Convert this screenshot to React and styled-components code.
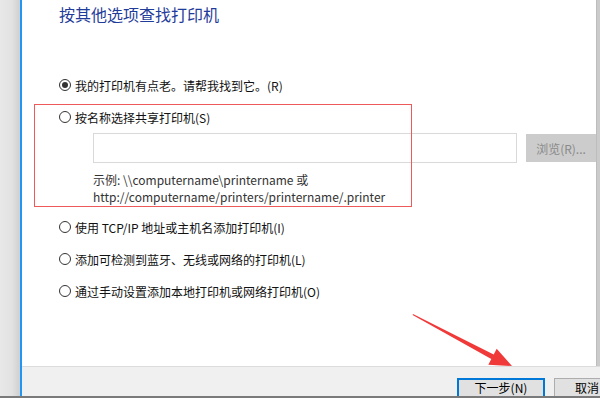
import React from "react";
import styled, { createGlobalStyle } from "styled-components";

const Global = createGlobalStyle`
  html, body { margin: 0; padding: 0; background: #fff; }
  body { font-family: "Noto Sans CJK SC", "Noto Sans", sans-serif; }
  * { box-sizing: border-box; }
`;

const Window = styled.div`
  position: relative;
  width: 600px;
  height: 398px;
  overflow: hidden;
  display: flex;
  flex-direction: column;
  background: #fff;
`;

const Body = styled.div`
  flex: 1;
  display: flex;
  min-height: 0;
`;

const SideStrip = styled.div`
  width: 20px;
  background: linear-gradient(to right, #e8e8e8 0%, #e2e2e2 60%, #cfcfcf 100%);
`;

const BlueLine = styled.div`
  width: 2px;
  background: #2196f3;
`;

const Main = styled.div`
  flex: 1;
  display: flex;
  flex-direction: column;
  min-width: 0;
`;

const ContentRow = styled.div`
  flex: 1;
  display: flex;
  min-height: 0;
`;

const Content = styled.div`
  flex: 1;
  padding: 4px 0 0 37px;
  display: flex;
  flex-direction: column;
`;

const RightEdge = styled.div`
  width: 4px;
  background: #cbcbcb;
  border-left: 1px solid #bdbdbd;
`;

const Title = styled.div`
  font-size: 16px;
  line-height: 20px;
  color: #1f3c9a;
`;

const Options = styled.div`
  margin-top: 51px;
  display: flex;
  flex-direction: column;
`;

const Option = styled.label`
  display: flex;
  align-items: center;
  height: 20px;
  margin-top: ${(p) => p.$gap || 0}px;
  font-size: 12px;
  color: #111;
  white-space: nowrap;
`;

const Radio = styled.span`
  width: 12px;
  height: 12px;
  border-radius: 50%;
  border: 1px solid #333;
  margin-right: 4px;
  display: flex;
  align-items: center;
  justify-content: center;
  background: #fff;
  &::after {
    content: "";
    width: 6px;
    height: 6px;
    border-radius: 50%;
    background: ${(p) => (p.$checked ? "#333" : "transparent")};
  }
`;

const SubBlock = styled.div`
  margin-left: 34px;
  display: flex;
  flex-direction: column;
`;

const InputRow = styled.div`
  display: flex;
  align-items: center;
  gap: 9px;
  margin-top: 6px;
`;

const TextBox = styled.div`
  flex: 1;
  height: 30px;
  border: 1px solid #d9d9d9;
  background: #fff;
`;

const BrowseButton = styled.div`
  width: 70px;
  height: 28px;
  background: #cccccc;
  color: #8a8a8a;
  font-size: 12px;
  display: flex;
  align-items: center;
  justify-content: center;
`;

const Example = styled.div`
  margin-top: 8px;
  font-size: 12px;
  line-height: 17px;
  color: #333;
  white-space: nowrap;
`;

const Footer = styled.div`
  height: 30px;
  background: #f0f0f0;
  border-top: 1px solid #dcdcdc;
  display: flex;
  align-items: flex-start;
  gap: 9px;
  padding: 11px 0 0 435px;
  overflow: hidden;
`;

const FooterButton = styled.div`
  flex: none;
  width: ${(p) => p.$width}px;
  height: 18px;
  background: #e1e1e1;
  border: 1px solid ${(p) => (p.$primary ? "#0078d7" : "#adadad")};
  border-bottom: none;
  box-shadow: ${(p) => (p.$primary ? "inset 1px 1px 0 0 #0078d7, inset -1px 0 0 0 #0078d7" : "none")};
  font-size: 12px;
  line-height: 16px;
  color: #000;
  display: flex;
  align-items: center;
  justify-content: center;
`;

const BottomLine = styled.div`
  height: 2px;
  background: #7a7a7a;
`;

const RedBox = styled.div`
  position: absolute;
  left: 34px;
  top: 104px;
  width: 378px;
  height: 103px;
  border: 1px solid #ee5a5a;
  pointer-events: none;
`;

const Arrow = styled.svg`
  position: absolute;
  left: 0;
  top: 0;
  pointer-events: none;
`;

export default function App() {
  return (
    <>
      <Global />
      <Window>
        <Body>
          <SideStrip />
          <BlueLine />
          <Main>
            <ContentRow>
              <Content>
                <Title>按其他选项查找打印机</Title>
                <Options>
                  <Option>
                    <Radio $checked />
                    我的打印机有点老。请帮我找到它。(R)
                  </Option>
                  <Option $gap={12}>
                    <Radio />
                    按名称选择共享打印机(S)
                  </Option>
                  <SubBlock>
                    <InputRow>
                      <TextBox />
                      <BrowseButton>浏览(R)...</BrowseButton>
                    </InputRow>
                    <Example>
                      示例: \\computername\printername 或
                      <br />
                      http://computername/printers/printername/.printer
                    </Example>
                  </SubBlock>
                  <Option $gap={12}>
                    <Radio />
                    使用 TCP/IP 地址或主机名添加打印机(I)
                  </Option>
                  <Option $gap={12}>
                    <Radio />
                    添加可检测到蓝牙、无线或网络的打印机(L)
                  </Option>
                  <Option $gap={12}>
                    <Radio />
                    通过手动设置添加本地打印机或网络打印机(O)
                  </Option>
                </Options>
              </Content>
              <RightEdge />
            </ContentRow>
            <Footer>
              <FooterButton $primary $width={88}>下一步(N)</FooterButton>
              <FooterButton $width={66}>取消</FooterButton>
            </Footer>
          </Main>
        </Body>
        <BottomLine />
        <RedBox />
        <Arrow width="600" height="398" viewBox="0 0 600 398">
          <polygon
            points="413,314 493.7,354.5 496.7,348.7 512,366 488.3,364.7 491.3,358.9 412.6,315"
            fill="#f03a3a"
          />
        </Arrow>
      </Window>
    </>
  );
}
